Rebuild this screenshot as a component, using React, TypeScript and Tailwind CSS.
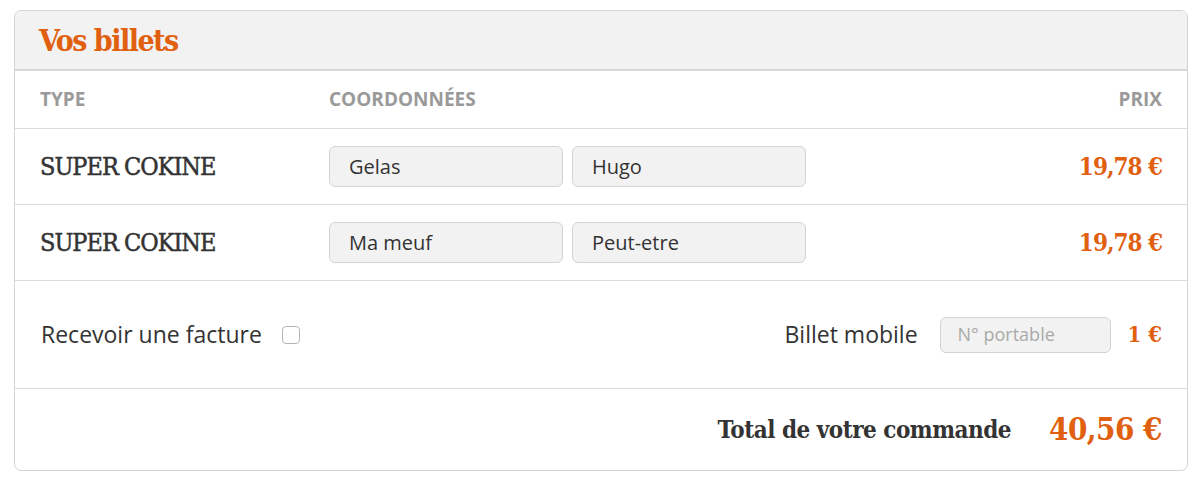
import React from "react";

const slab: React.CSSProperties = {
  fontFamily: '"DejaVu Serif Condensed", "DejaVu Serif", "Liberation Serif", serif',
  fontStretch: "condensed",
};
const sans = { fontFamily: '"Open Sans", "Noto Sans", sans-serif' };

function NameInput({ value }: { value: string }) {
  return (
    <div
      className="w-[234px] h-[41px] rounded-[6px] border border-[#d3d3d3] bg-[#f2f2f2] flex items-center pl-[19px] text-[20px] text-[#333]"
      style={sans}
    >
      {value}
    </div>
  );
}

function TicketRow({ first, last }: { first: string; last: string }) {
  return (
    <div className="h-[76px] border-b border-[#dcdcdc] flex items-center px-[25px]">
      <div
        className="w-[289px] text-[25px] text-[#333] tracking-[-1px] [-webkit-text-stroke:0.5px_#333]"
        style={slab}
      >
        SUPER COKINE
      </div>
      <div className="flex gap-[9px]">
        <NameInput value={first} />
        <NameInput value={last} />
      </div>
      <div className="ml-auto text-[24px] font-bold text-[#e0600f] tracking-[-1px]" style={slab}>
        19,78 €
      </div>
    </div>
  );
}

export default function App() {
  return (
    <div className="bg-white w-[1200px] h-[487px] pt-[10px] pl-[14px] pr-[12px]">
      <div className="rounded-[7px] border border-[#d4d4d4] overflow-hidden bg-white">
        <div className="h-[60px] bg-[#f2f2f2] border-b-[2px] border-[#d8d8d8] flex items-center pl-[24px]">
          <span className="text-[30px] font-bold text-[#e0600f] tracking-[-1.5px]" style={slab}>
            Vos billets
          </span>
        </div>
        <div
          className="h-[58px] border-b border-[#dcdcdc] flex items-center px-[25px] text-[19px] font-bold text-[#9a9a9a]"
          style={sans}
        >
          <div className="w-[289px]">TYPE</div>
          <div>COORDONNÉES</div>
          <div className="ml-auto">PRIX</div>
        </div>
        <TicketRow first="Gelas" last="Hugo" />
        <TicketRow first="Ma meuf" last="Peut-etre" />
        <div className="h-[108px] border-b border-[#dcdcdc] flex items-center pl-[26px] pr-[25px]" style={sans}>
          <span className="text-[23px] text-[#333]">Recevoir une facture</span>
          <span className="ml-[20px] w-[18px] h-[18px] rounded-[4px] border border-[#b5b5b5] bg-white" />
          <span className="ml-auto text-[23px] text-[#333]">Billet mobile</span>
          <div className="ml-[22px] w-[171px] h-[36px] rounded-[6px] border border-[#d3d3d3] bg-[#f2f2f2] flex items-center pl-[17px] text-[18px] text-[#aaa]">
            N° portable
          </div>
          <span className="ml-[17px] text-[22px] font-bold text-[#e0600f]" style={slab}>
            1 €
          </span>
        </div>
        <div className="h-[81px] flex items-center justify-end px-[25px]">
          <span className="text-[24px] font-bold text-[#333] tracking-[-0.5px]" style={slab}>
            Total de votre commande
          </span>
          <span className="ml-[38px] text-[31px] font-bold text-[#e0600f] tracking-[-0.5px]" style={slab}>
            40,56 €
          </span>
        </div>
      </div>
    </div>
  );
}
